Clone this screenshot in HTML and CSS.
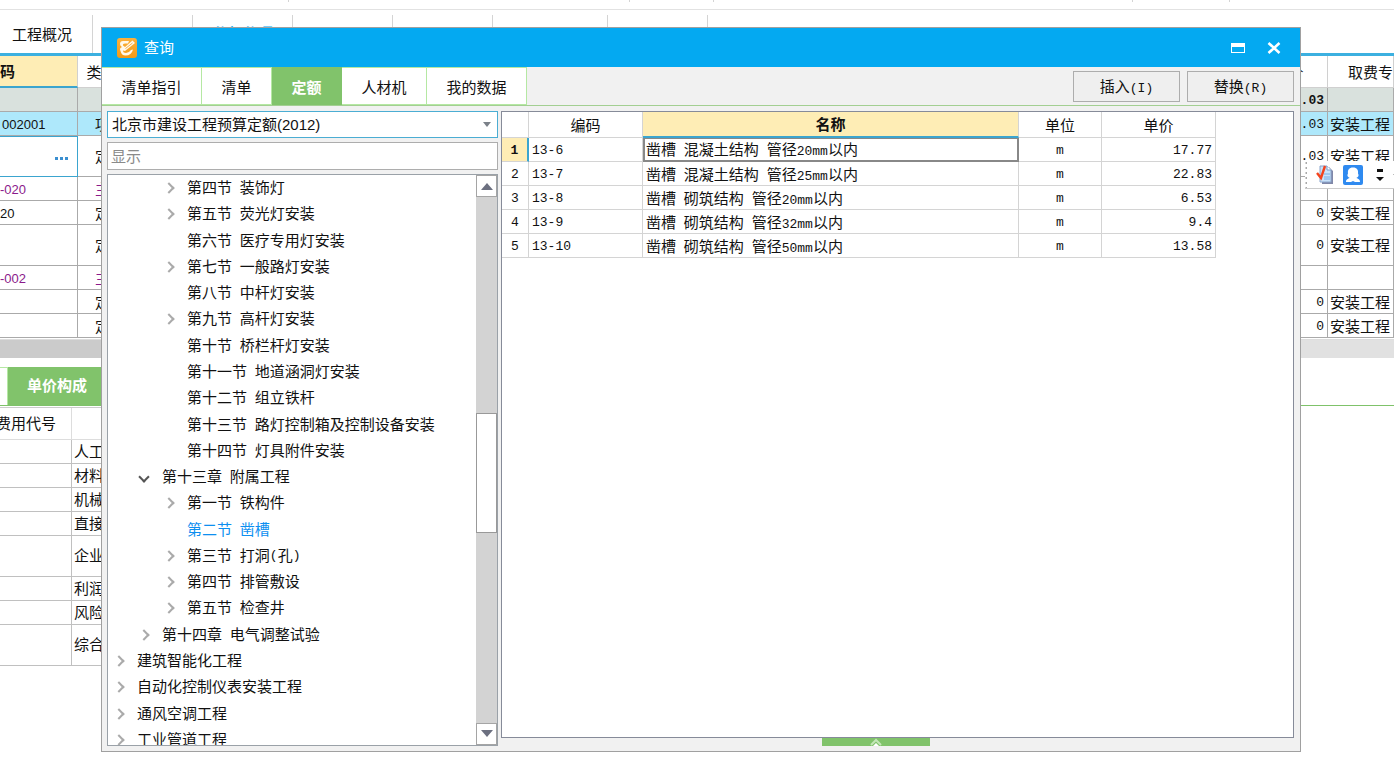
FILE: index.html
```html
<!DOCTYPE html>
<html lang="zh-CN">
<head>
<meta charset="utf-8">
<title>查询</title>
<link rel="stylesheet" href="styles.css">
</head>
<body>
<main class="app">
  <div class="ribbon"><i class="w1"></i><i class="w2"></i><i class="w3"></i><i class="w4"></i><i class="w5"></i></div>
  <nav class="main-tabs">
    <button class="first">工程概况</button><button></button><button class="on">分部分项</button><button></button><button></button><button class="wide"></button><button></button>
  </nav>
  <table class="sheet">
    <colgroup><col class="c-code"><col class="c-type"><col><col class="c-total"><col class="c-major"></colgroup>
    <thead><tr><th class="picked">码</th><th>类别</th><th></th><th>合价</th><th class="cut">取费专业</th></tr></thead>
    <tbody>
      <tr class="sum"><td></td><td></td><td></td><td class="num">.03</td><td></td></tr>
      <tr class="sel"><td class="code">002001</td><td class="mid">项</td><td></td><td class="num">.03</td><td>安装工程</td></tr>
      <tr class="tall"><td class="edit"><button class="more" aria-label="更多"><svg width="14" height="4"><path d="M0 1h3v3H0zM5 1h3v3H5zM10 1h3v3h-3z" fill="#3b8fd0"/></svg></button></td><td class="mid">定</td><td></td><td class="num">.03</td><td>安装工程</td></tr>
      <tr class="main"><td>-020</td><td class="mid">主</td><td></td><td></td><td></td></tr>
      <tr><td>20</td><td class="mid">定</td><td></td><td class="num">0</td><td>安装工程</td></tr>
      <tr class="tall"><td></td><td class="mid">定</td><td></td><td class="num">0</td><td>安装工程</td></tr>
      <tr class="main"><td>-002</td><td class="mid">主</td><td></td><td></td><td></td></tr>
      <tr><td></td><td class="mid">定</td><td></td><td class="num">0</td><td>安装工程</td></tr>
      <tr><td></td><td class="mid">定</td><td></td><td class="num">0</td><td>安装工程</td></tr>
    </tbody>
  </table>
  <div class="hbar"><span></span></div>
  <nav class="sub-tabs"><span class="stub"></span><button>单价构成</button></nav>
  <table class="detail">
    <colgroup><col class="c-sym"><col></colgroup>
    <thead><tr><th>费用代号</th><th></th></tr></thead>
    <tbody>
      <tr><td></td><td>人工费</td></tr>
      <tr><td></td><td>材料费</td></tr>
      <tr><td></td><td>机械费</td></tr>
      <tr><td></td><td>直接费</td></tr>
      <tr class="tall"><td></td><td>企业管理费</td></tr>
      <tr><td></td><td>利润</td></tr>
      <tr><td></td><td>风险费用</td></tr>
      <tr class="tall"><td></td><td>综合单价</td></tr>
    </tbody>
  </table>
</main>

<div class="float-bar">
  <svg class="grip" width="3" height="27"><path d="M1.5 1v26" stroke="#aaa" stroke-width="2" stroke-dasharray="2 3"/></svg>
  <button aria-label="检查"><svg width="18" height="20" viewBox="0 0 18 20"><path d="M6 2h7l4 4v13H6z" fill="#8088a8"/><path d="M4 1h7l4 4v12H4z" fill="#c9e3fa" stroke="#8aa4cc"/><path d="M11 1v4h4" fill="#fff" stroke="#7c9cc8"/><path d="M8 9h6M8 12h6M8 14h6" stroke="#78aee4"/><path d="M1 8l4 5L9 1" fill="none" stroke="#f4431c" stroke-width="2.400"/></svg></button>
  <button aria-label="客服"><svg width="20" height="20" viewBox="0 0 20 20"><rect width="20" height="20" rx="2" fill="#2f8af0"/><path d="M10 2.500c-4 0-5.500 2.500-5 6-.8 1.200-.7 2.500 0 3.200.8.900 1.500.8 1.500 1.300-1.500.9-3.500 1.300-3.500 4h5l2-1 2 1h5c0-2.700-2-3.100-3.500-4 0-.5.700-.4 1.500-1.300.7-.7.800-2 0-3.200.5-3.500-1-6-5-6z" fill="#fff"/></svg></button>
  <button class="drop" aria-label="选项"><svg width="8" height="16"><path d="M1 2h6v3H1zM0 10h8l-4 4z" fill="#111"/></svg></button>
  <i class="dash"></i>
</div>

<section class="dialog" role="dialog" aria-labelledby="dlg-title">
  <header class="title-bar">
    <svg width="20" height="20" viewBox="0 0 20 20"><defs><linearGradient id="og" x2="0" y2="1"><stop stop-color="#fbb13c"/><stop offset="1" stop-color="#f39a16"/></linearGradient></defs><rect width="20" height="20" rx="3" fill="url(#og)"/><path d="M12 3H6Q3 3 3 6q0 2 2 3-3 1-1.500 4 1 4.500 5 4.500 6 0 7.500-6l-2 .5q-2 3-5 3-3 0-3-2.500L8 13 18 5l-2.500-2.500L8 9 6 7.500Q5.500 5.500 8 5.500h3z" fill="#fff8ea"/><path d="M8.500 10.500L15.500 5" stroke="#f7b04a" stroke-width="1"/></svg>
    <h1 id="dlg-title">查询</h1>
    <button aria-label="最大化"><svg width="14" height="10"><path d="M0 0h14v10H0zM1 4v5h12V4z" fill="#fff" fill-rule="evenodd"/></svg></button>
    <button aria-label="关闭"><svg width="14" height="12" viewBox="0 0 14 12"><path d="M1.500 1l11 10M12.500 1l-11 10" stroke="#fff" stroke-width="2.600"/></svg></button>
  </header>
  <div class="tool-row">
    <nav class="tabs">
      <button class="t4">清单指引</button><button class="t2">清单</button><button class="t2 on">定额</button><button class="t3">人材机</button><button class="t4">我的数据</button>
    </nav>
    <div class="actions"><button>插入<span class="n">(I)</span></button><button>替换<span class="n">(R)</span></button></div>
  </div>
  <div class="body">
    <div class="left">
      <div class="combo">
        <select aria-label="定额库"><option>北京市建设工程预算定额(2012)</option></select>
        <svg width="8" height="5"><path d="M0 0h8L4 5z" fill="#7b8189"/></svg>
      </div>
      <input class="search" type="text" placeholder="显示" aria-label="搜索">
      <div class="tree-box">
        <ul class="tree">
          <li class="l2 shut">第四节<span class="n"> </span>装饰灯</li>
          <li class="l2 shut">第五节<span class="n"> </span>荧光灯安装</li>
          <li class="l2">第六节<span class="n"> </span>医疗专用灯安装</li>
          <li class="l2 shut">第七节<span class="n"> </span>一般路灯安装</li>
          <li class="l2">第八节<span class="n"> </span>中杆灯安装</li>
          <li class="l2 shut">第九节<span class="n"> </span>高杆灯安装</li>
          <li class="l2">第十节<span class="n"> </span>桥栏杆灯安装</li>
          <li class="l2">第十一节<span class="n"> </span>地道涵洞灯安装</li>
          <li class="l2">第十二节<span class="n"> </span>组立铁杆</li>
          <li class="l2">第十三节<span class="n"> </span>路灯控制箱及控制设备安装</li>
          <li class="l2">第十四节<span class="n"> </span>灯具附件安装</li>
          <li class="l1 open">第十三章<span class="n"> </span>附属工程</li>
          <li class="l2 shut">第一节<span class="n"> </span>铁构件</li>
          <li class="l2 current">第二节<span class="n"> </span>凿槽</li>
          <li class="l2 shut">第三节<span class="n"> </span>打洞<span class="n">(</span>孔<span class="n">)</span></li>
          <li class="l2 shut">第四节<span class="n"> </span>排管敷设</li>
          <li class="l2 shut">第五节<span class="n"> </span>检查井</li>
          <li class="l1 shut">第十四章<span class="n"> </span>电气调整试验</li>
          <li class="l0 shut">建筑智能化工程</li>
          <li class="l0 shut">自动化控制仪表安装工程</li>
          <li class="l0 shut">通风空调工程</li>
          <li class="l0 shut">工业管道工程</li>
        </ul>
        <div class="vbar">
          <button aria-label="向上"><svg width="12" height="7"><path d="M0 7h12L6 0z" fill="#6c7080"/></svg></button>
          <span class="before"></span><span class="thumb"></span><span class="after"></span>
          <button aria-label="向下"><svg width="12" height="7"><path d="M0 0h12L6 7z" fill="#6c7080"/></svg></button>
        </div>
      </div>
    </div>
    <div class="right">
      <div class="panel">
        <table class="items">
          <colgroup><col class="k-no"><col class="k-code"><col class="k-name"><col class="k-unit"><col class="k-price"></colgroup>
          <thead><tr><th></th><th>编码</th><th class="picked">名称</th><th>单位</th><th>单价</th></tr></thead>
          <tbody>
            <tr class="active"><th scope="row">1</th><td class="code">13-6</td><td class="name">凿槽<span class="n"> </span>混凝土结构<span class="n"> </span>管径<span class="n">20mm</span>以内</td><td class="unit">m</td><td class="price">17.77</td></tr>
            <tr><th scope="row">2</th><td class="code">13-7</td><td class="name">凿槽<span class="n"> </span>混凝土结构<span class="n"> </span>管径<span class="n">25mm</span>以内</td><td class="unit">m</td><td class="price">22.83</td></tr>
            <tr><th scope="row">3</th><td class="code">13-8</td><td class="name">凿槽<span class="n"> </span>砌筑结构<span class="n"> </span>管径<span class="n">20mm</span>以内</td><td class="unit">m</td><td class="price">6.53</td></tr>
            <tr><th scope="row">4</th><td class="code">13-9</td><td class="name">凿槽<span class="n"> </span>砌筑结构<span class="n"> </span>管径<span class="n">32mm</span>以内</td><td class="unit">m</td><td class="price">9.4</td></tr>
            <tr><th scope="row">5</th><td class="code">13-10</td><td class="name">凿槽<span class="n"> </span>砌筑结构<span class="n"> </span>管径<span class="n">50mm</span>以内</td><td class="unit">m</td><td class="price">13.58</td></tr>
          </tbody>
        </table>
      </div>
      <button class="pull" aria-label="展开"><svg width="12" height="8" viewBox="0 0 12 8"><path d="M1 7l5-5 5 5" fill="none" stroke="#c4e6b8" stroke-width="2"/><path d="M3 8l3-3 3 3z" fill="#fff"/></svg></button>
    </div>
  </div>
</section>
</body>
</html>
```
FILE: styles.css
```css
*, *::before { box-sizing: border-box; }
html, body { height: 100%; }
body {
  margin: 0;
  position: relative;
  overflow: hidden;
  background: #fff;
  color: #111;
  font: 15px/20px "Liberation Sans", "Noto Sans CJK SC", sans-serif;
}
button, input, select { font: inherit; color: inherit; }
button { padding: 0; border: 0; background: none; white-space: nowrap; }
svg { display: block; }
table { border-collapse: separate; border-spacing: 0; table-layout: fixed; }
th, td { padding: 0; font-weight: 400; white-space: nowrap; overflow: hidden; }
.n { font: 13px/16px "Liberation Mono", monospace; white-space: pre; }

/* main window */
.ribbon { display: flex; height: 10px; border-bottom: 1px solid #e2e2e2; }
.ribbon i { height: 2px; border-right: 1px solid #d4d4d4; }
.w1 { width: 289px; }
.w2 { width: 341px; }
.w3 { width: 84px; }
.w4 { width: 419px; }
.w5 { width: 97px; }
.main-tabs { display: flex; height: 46px; padding-top: 5px; border-bottom: 3px solid #3cb0e0; }
.main-tabs button { width: 100px; border-right: 1px solid #d4d4d4; }
.main-tabs .first { width: 93px; padding: 2px 8px 0 0; }
.main-tabs .wide { width: 115px; }
.main-tabs .on { color: #04a9f1; font-weight: 700; }

.sheet { width: 100%; }
.c-code { width: 78px; }
.c-type { width: 48px; }
.c-total { width: 78px; }
.c-major { width: 66px; }
.sheet th { height: 32px; padding-top: 2px; border-right: 1px solid #d0d0d0; border-bottom: 1px solid #d0d0d0; }
.sheet .picked { background: #feedb5; border-bottom: 2px solid #3ba5cf; text-align: left; font-weight: 700; }
.sheet .cut { padding-left: 20px; text-align: left; }
.sheet td { height: 24px; padding: 2px 0 0 2px; border-right: 1px solid #aaa; border-bottom: 1px solid #aaa; }
.sheet td:first-child { padding-left: 0; font-size: 13px; }
.sheet td.code { padding-left: 2px; }
.sheet .mid { text-align: center; }
.sheet .num { padding-right: 3px; font: 13px/16px "Liberation Mono", monospace; text-align: right; }
.sheet .tall td { height: 41px; }
.sheet .sum td { background: #d9e1dd; }
.sheet .sum .num { font-weight: 700; }
.sheet .sel td { background: #aee8fb; }
.sheet .main td { color: #8b1a8b; }
.sheet td.edit { border: 1px solid #3ba5cf; border-left: 0; }
.more { display: block; margin-left: auto; margin-right: 8px; }
.hbar { height: 19px; margin-top: 1px; border-top: 1px solid #ddd; background: #e1e1e1; }
.hbar span { display: block; width: 50%; height: 100%; background: #cbcbcb; }
.sub-tabs { display: flex; height: 39px; margin-top: 9px; border-bottom: 1px solid #7fc26a; }
.stub { width: 8px; border: solid #b5e8a3; border-width: 1px 1px 0 0; }
.sub-tabs button { width: 98px; background: #81c36b; color: #fff; font-weight: 700; }
.detail { width: 50%; margin-top: 1px; border-top: 1px solid #ccc; }
.c-sym { width: 72px; }
.detail th { height: 32px; border-right: 1px solid #ddd; border-bottom: 1px solid #ddd; text-align: left; }
.detail th:first-child { text-indent: -4px; }
.detail td { height: 24px; padding-left: 2px; border-right: 1px solid #c0c0c0; border-bottom: 1px solid #c0c0c0; }
.detail .tall td { height: 41px; }

.float-bar {
  position: absolute;
  top: 161px;
  right: 0;
  display: flex;
  align-items: center;
  gap: 9px;
  width: 89px;
  height: 28px;
  border-bottom: 1px solid #ccc;
  background: #fff;
}
.float-bar button:nth-of-type(2) { margin-right: 4px; }
.float-bar .dash { width: 3px; height: 1px; background: #bbb; }

/* query dialog */
.dialog {
  position: absolute;
  inset: 27px 93px 29px 101px;
  display: flex;
  flex-direction: column;
  border: 1px solid #a0a0a0;
  background: #f1f1f1;
}
.title-bar { display: flex; align-items: center; height: 39px; padding: 0 19px 0 15px; background: #04a9f1; color: #fff; }
.title-bar h1 { flex: 1; margin: 0 0 0 7px; font-size: 15px; font-weight: 400; }
.title-bar button { margin-left: 22px; }
.tool-row { display: flex; justify-content: space-between; height: 39px; border-bottom: 1px solid #a3cf92; }
.tabs { display: flex; }
.tabs button { border: 1px solid #b5e8a3; border-left: 0; background: #fff; padding-top: 4px; }
.tabs .t2 { width: 70px; }
.tabs .t3 { width: 85px; }
.tabs .t4 { width: 100px; }
.tabs .on { border-color: #81c36b; background: #81c36b; color: #fff; font-weight: 700; }
.actions { display: flex; gap: 7px; padding: 4px 6px 3px 0; }
.actions button { width: 107px; border: 1px solid #adadad; background: #efefef; }
.body { flex: 1; display: flex; gap: 3px; min-height: 0; padding: 5px 6px 5px 5px; }
.left { display: flex; flex-direction: column; width: 391px; }
.combo { display: grid; align-items: center; height: 27px; border: 1px solid #4badd3; background: #fff; }
.combo select, .combo svg { grid-area: 1 / 1; }
.combo select { width: 100%; height: 25px; padding: 0 4px; border: 0; appearance: none; background: #fff; }
.combo svg { justify-self: end; margin-right: 6px; z-index: 1; pointer-events: none; }
.search { width: 100%; height: 28px; margin: 4px 0; padding: 0 3px; border: 1px solid #adadad; background: #fff; }
.search::placeholder { color: #8a8a8a; opacity: 1; }
.tree-box { flex: 1; display: flex; min-height: 0; overflow: hidden; border: 1px solid #9aa1a8; background: #fff; }
.tree { flex: 1; display: grid; grid-auto-rows: 1fr; height: calc(100% + 8px); margin: 0; padding: 0; list-style: none; }
.tree li { display: flex; align-items: center; white-space: pre; }
.tree li::before { content: ""; width: 8px; height: 8px; margin-right: 14px; }
.l0 { padding-left: 7px; }
.l1 { padding-left: 32px; }
.l2 { padding-left: 57px; }
.tree .shut::before { border: solid #aaa; border-width: 2px 2px 0 0; transform: rotate(45deg); }
.tree .open::before { border: solid #555; border-width: 0 2px 2px 0; transform: rotate(45deg); }
.tree .current { color: #0d8ff0; }
.vbar { display: flex; flex-direction: column; width: 21px; background: #d3d3d3; }
.vbar button { display: grid; place-items: center; height: 22px; border: 1px solid #a5a5a5; background: #fff; }
.vbar .before { flex: 218; }
.vbar .thumb { flex: 119; border: 1px solid #999; background: #fff; }
.vbar .after { flex: 191; }
.right { flex: 1; display: flex; flex-direction: column; align-items: center; }
.panel { flex: 1; width: 100%; border: 1px solid #868b99; background: #fff; }
.pull { display: grid; place-items: center; width: 108px; height: 8px; margin-right: 44px; background: #81c36b; }

.items { width: 714px; }
.k-no { width: 27px; }
.k-code { width: 114px; }
.k-name { width: 376px; }
.k-unit { width: 83px; }
.k-price { width: 114px; }
.items th, .items td { height: 24px; padding-top: 2px; border-right: 1px solid #d4d4d4; border-bottom: 1px solid #d4d4d4; }
.items thead th { height: 26px; }
.items thead .picked { background: #feedb5; border-bottom: 2px solid #3ba5cf; font-weight: 700; }
.items tbody th, .items .code, .items .unit, .items .price { font: 13px/16px "Liberation Mono", monospace; }
.items tbody .active th { background: #feedb5; border-right: 2px solid #3ba5cf; font-weight: 700; }
.items .code { padding-left: 3px; }
.items .name { padding-left: 3px; line-height: 20px; }
.items .active .name { border: 2px solid #888; border-top-width: 1px; padding: 1px 0 0 1px; }
.items .unit { text-align: center; }
.items .price { padding-right: 3px; text-align: right; }
```
